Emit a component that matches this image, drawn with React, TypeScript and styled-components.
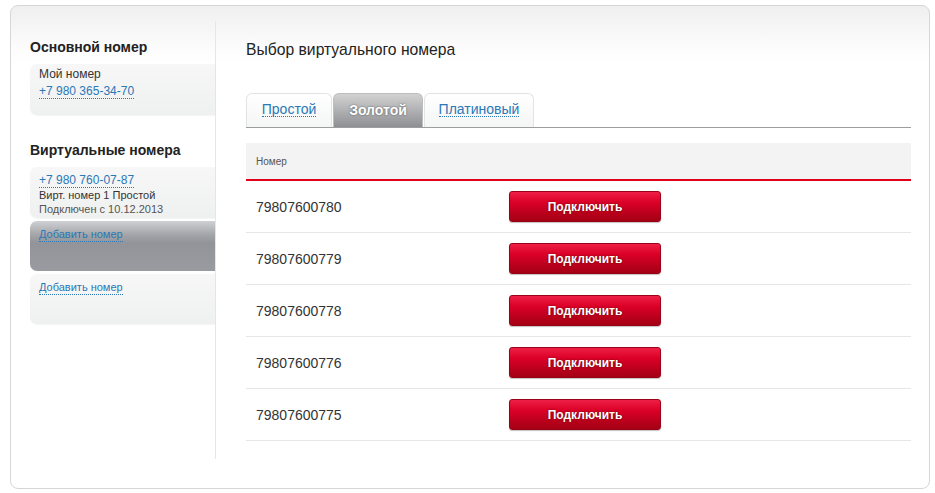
import React from "react";
import styled, { createGlobalStyle } from "styled-components";

const Global = createGlobalStyle`
  html, body { margin: 0; padding: 0; background: #fff; }
  body { font-family: "Liberation Sans", Arial, sans-serif; color: #333; }
  * { box-sizing: border-box; }
`;

const Card = styled.div`
  margin: 5px 0 0 10px;
  width: 920px;
  height: 484px;
  border: 1px solid #d6d6d6;
  border-radius: 8px;
  background: linear-gradient(#efefef 0px, #fdfdfd 45px, #fff 60px);
  padding-top: 15px;
  display: grid;
  grid-template-columns: 205px 1fr;
  align-items: start;
`;

const Sidebar = styled.aside`
  height: 438px;
  border-right: 1px solid #e6e6e6;
  padding: 17px 0 0 19px;
`;

const SideTitle = styled.h3`
  margin: 0 0 8px;
  font-size: 14px;
  line-height: 18px;
  font-weight: bold;
  color: #222;
`;

const Group = styled.div<{ $gap?: number }>`
  display: flex;
  flex-direction: column;
  gap: 3px;
  margin-bottom: ${(p) => p.$gap ?? 0}px;
`;

const Item = styled.div<{ $active?: boolean; $h: number }>`
  height: ${(p) => p.$h}px;
  padding: 3px 0 0 9px;
  border-radius: 7px 0 0 7px;
  background: ${(p) =>
    p.$active
      ? "linear-gradient(#cfd0d3 0px, #a2a4a8 14px, #929499 22px, #999ba0 100%)"
      : "linear-gradient(#f7f7f7, #eff0f0)"};
  box-shadow: ${(p) => (p.$active ? "none" : "0 1px 1px rgba(0,0,0,0.04)")};
`;

const ItemText = styled.div<{ $size?: number; $color?: string }>`
  font-size: ${(p) => p.$size ?? 12}px;
  line-height: 14px;
  color: ${(p) => p.$color ?? "#333"};
`;

const Link = styled.a<{ $size?: number }>`
  display: inline-block;
  font-size: ${(p) => p.$size ?? 12}px;
  line-height: 13px;
  color: #2a78b8;
  text-decoration: none;
  border-bottom: 1px dotted #2a78b8;
  cursor: pointer;
`;

const Main = styled.main`
  padding: 20px 18px 0 30px;
`;

const Title = styled.h2`
  margin: 0;
  font-size: 15.7px;
  line-height: 18px;
  font-weight: normal;
  color: #222;
`;

const Tabs = styled.div`
  margin-top: 34px;
  display: flex;
  border-bottom: 1px solid #9d9d9d;
  height: 35px;
  align-items: flex-end;
`;

const Tab = styled.div<{ $active?: boolean; $w: number }>`
  width: ${(p) => p.$w}px;
  height: 34px;
  margin-right: 1px;
  border: 1px solid ${(p) => (p.$active ? "#bdbdbd" : "#e3e3e3")};
  border-bottom: none;
  border-radius: 6px 6px 0 0;
  background: ${(p) =>
    p.$active
      ? "linear-gradient(#d2d2d2, #8e8f93)"
      : "linear-gradient(#ffffff, #f4f5f5)"};
  display: flex;
  align-items: center;
  justify-content: center;
  padding-bottom: 1px;
`;

const TabLabel = styled.span`
  font-size: 14px;
  font-weight: bold;
  color: #fff;
  text-shadow: 0 0 2px rgba(0, 0, 0, 0.55);
`;

const Table = styled.div`
  margin-top: 15px;
`;

const Head = styled.div`
  height: 38px;
  background: #f3f3f3;
  border-bottom: 2px solid #e2001a;
  display: flex;
  align-items: center;
  padding-left: 10px;
  font-size: 10px;
  color: #555;
`;

const Row = styled.div`
  height: 52px;
  border-bottom: 1px solid #e6e6e6;
  display: grid;
  grid-template-columns: 253px 152px;
  align-items: center;
  padding-left: 10px;
`;

const Num = styled.span`
  font-size: 14px;
  color: #333;
`;

const Btn = styled.button`
  width: 152px;
  height: 31px;
  border: 1px solid #9a0016;
  border-radius: 3px;
  background: linear-gradient(#ee1f45 0%, #dc0028 35%, #b8001b 75%, #a50015 100%);
  color: #fff;
  font-family: "Liberation Sans", Arial, sans-serif;
  font-size: 12px;
  font-weight: bold;
  text-shadow: 0 0 2px rgba(60, 0, 0, 0.8);
  box-shadow: 0 1px 1px rgba(0, 0, 0, 0.25);
  cursor: pointer;
  padding: 0;
`;

const numbers = ["79807600780", "79807600779", "79807600778", "79807600776", "79807600775"];

export default function App() {
  return (
    <>
      <Global />
      <Card>
        <Sidebar>
          <SideTitle>Основной номер</SideTitle>
          <Group $gap={26}>
            <Item $h={51}>
              <ItemText>Мой номер</ItemText>
              <Link>+7 980 365-34-70</Link>
            </Item>
          </Group>
          <SideTitle>Виртуальные номера</SideTitle>
          <Group>
            <Item $h={51}>
              <Link>+7 980 760-07-87</Link>
              <ItemText $size={11}>Вирт. номер 1 Простой</ItemText>
              <ItemText $size={11} $color="#555">Подключен с 10.12.2013</ItemText>
            </Item>
            <Item $h={50} $active>
              <Link $size={11}>Добавить номер</Link>
            </Item>
            <Item $h={50}>
              <Link $size={11}>Добавить номер</Link>
            </Item>
          </Group>
        </Sidebar>
        <Main>
          <Title>Выбор виртуального номера</Title>
          <Tabs>
            <Tab $w={86}>
              <Link $size={14}>Простой</Link>
            </Tab>
            <Tab $w={90} $active>
              <TabLabel>Золотой</TabLabel>
            </Tab>
            <Tab $w={110}>
              <Link $size={14}>Платиновый</Link>
            </Tab>
          </Tabs>
          <Table>
            <Head>Номер</Head>
            {numbers.map((n) => (
              <Row key={n}>
                <Num>{n}</Num>
                <Btn>Подключить</Btn>
              </Row>
            ))}
          </Table>
        </Main>
      </Card>
    </>
  );
}
